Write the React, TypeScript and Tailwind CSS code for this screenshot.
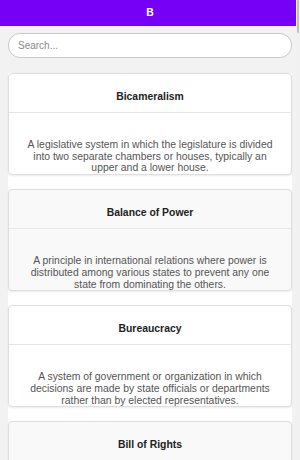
import React from "react";

const items = [
  {
    title: "Bicameralism",
    desc: "A legislative system in which the legislature is divided into two separate chambers or houses, typically an upper and a lower house.",
  },
  {
    title: "Balance of Power",
    desc: "A principle in international relations where power is distributed among various states to prevent any one state from dominating the others.",
  },
  {
    title: "Bureaucracy",
    desc: "A system of government or organization in which decisions are made by state officials or departments rather than by elected representatives.",
  },
  {
    title: "Bill of Rights",
    desc: "The first ten amendments to the United States Constitution, which guarantee essential rights and liberties.",
  },
];

export default function App() {
  return (
    <div
      className="relative w-[300px] h-[460px] overflow-hidden bg-[#f2f2f2]"
      style={{ fontFamily: '"Liberation Sans", Arial, sans-serif' }}
    >
      <div className="h-[26px] bg-[#7600f5] flex items-center justify-center text-white font-bold text-[10.4px]">
        B
      </div>
      <div className="mx-[8px] mt-[7px] h-[25px] rounded-[12px] border border-[#c9c9c9] bg-white flex items-center px-[9px]">
        <input
          className="w-full bg-transparent outline-none text-[10px] text-[#333] placeholder:text-[#8a8a8a]"
          placeholder="Search..."
        />
      </div>
      <div className="mx-[8px] mt-[15px] bg-white flex flex-col gap-[14px]">
        {items.map((it, i) => (
          <div
            key={it.title}
            className={`rounded-[4px] border border-[#dedede] shadow-[0_1px_2px_rgba(0,0,0,0.08)] ${
              i % 2 === 1 ? "bg-[#f9f9f9]" : "bg-white"
            }`}
          >
            <div className="pt-[17px] pb-[9px] border-b border-[#e6e6e6] text-center font-bold text-[10.4px] leading-[12px] text-[#222]">
              {it.title}
            </div>
            <div className="pt-[26px] px-[12px] text-center text-[10.4px] leading-[11.7px] text-[#555]">
              {it.desc}
            </div>
          </div>
        ))}
      </div>
      <div className="absolute right-0 top-0 w-[4px] h-full bg-[#f1f1f1]">
        <div className="ml-[1px] w-[2px] h-[33px] rounded-full bg-[#c1c1c1]" />
      </div>
    </div>
  );
}
